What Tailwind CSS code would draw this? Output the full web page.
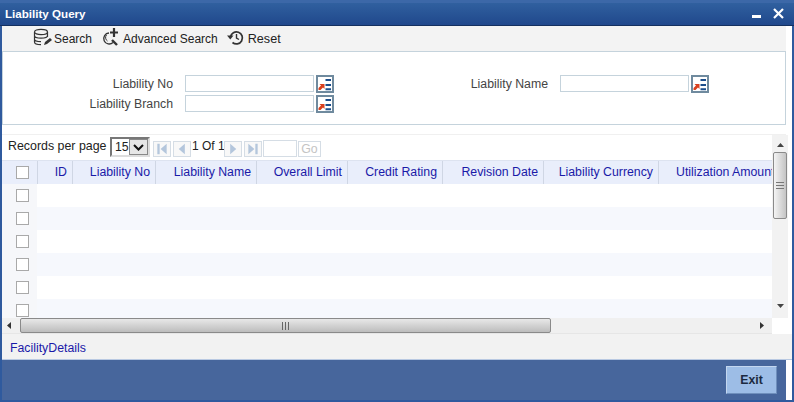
<!DOCTYPE html>
<html lang="en">
<head>
  <meta charset="UTF-8" />
  <meta name="viewport" content="width=device-width,initial-scale=1" />
  <title>Liability Query</title>
  <script src="https://cdn.jsdelivr.net/npm/@tailwindcss/browser@4"></script>
</head>

<body class="w-[794px] h-[402px] overflow-hidden bg-[#2f5a9e] font-['Liberation_Sans',Arial,sans-serif] text-[12.3px] text-[#222]">

<!-- ========= TITLE BAR ========= -->
<header class="h-[26px] flex items-center justify-between bg-gradient-to-b from-[#30609f] to-[#20488c] border-b border-[#14305f] border-t-[3px] border-t-[#3c68a8]">
  <span class="pl-[5px] font-bold text-[11.6px] text-white">Liability Query</span>
  <div class="flex items-start">
    <span class="block w-[9px] h-[3px] bg-white mr-[12px] mt-[5px]"></span>
    <svg class="mr-[10px] -mt-[2px]" width="11" height="11" viewBox="0 0 11 11"><path d="M1 1l9 9M10 1l-9 9" stroke="#fff" stroke-width="2.2"/></svg>
  </div>
</header>

<div class="flex h-[376px]">
  <div class="w-[2px] bg-[#2f5a9e]"></div>

  <div class="w-[790px] bg-white flex flex-col">
    <!-- ========= TOOLBAR ========= -->
    <div class="h-[25px] w-[784px] bg-[#f3f3f3] flex items-center pl-[30px] pt-[2px] text-[12px] text-[#222]">
      <svg class="mr-[1px] -mt-[3px]" width="21" height="20" viewBox="0 0 21 20" fill="none" stroke="#333" stroke-width="1.2">
        <ellipse cx="9" cy="4" rx="6.5" ry="2.6"/>
        <path d="M2.500 4v10c0 1.500 3 2.600 6.500 2.600M15.500 4v5M2.500 7.500c0 1.500 3 2.600 6.500 2.600s6.500-1 6.500-2.600M2.500 11c0 1.500 3 2.600 6.500 2.600"/>
        <path d="M12 17l1-3 5-4 2 2-5 4z" fill="#333" stroke="none"/>
      </svg>
      <span class="mr-[10px]">Search</span>
      <svg class="mr-[4px] -mt-[3px]" width="17" height="19" viewBox="0 0 17 19" fill="none" stroke="#333">
        <path d="M7 5a5.500 5.500 0 1 0 4 9.500" stroke-width="1.300"/>
        <path d="M4.500 7a4 4 0 0 0 1 6" stroke-width="1"/>
        <path d="M10 12l5 5" stroke-width="2.400"/>
        <path d="M12 0v9M8 4.500h8" stroke-width="2.200"/>
      </svg>
      <span class="mr-[9px]">Advanced Search</span>
      <svg class="mr-[4px] -mt-[3px]" width="17" height="16" viewBox="0 0 17 16" fill="none" stroke="#333" stroke-width="1.700">
        <path d="M3.500 7a6 6 0 1 1 2 5.500"/>
        <path d="M0 5.500h6.500L3.300 9.500z" fill="#333" stroke="none"/>
        <path d="M9.500 4v4l2.500 1.500" stroke-width="1.400"/>
      </svg>
      <span class="text-[12.6px]">Reset</span>
    </div>

    <!-- ========= SEARCH FORM ========= -->
    <div class="h-[75px] w-[784px] border border-[#c5d3dc] pt-[23px] text-[#444]">
      <div class="flex items-center h-[18px]">
        <label class="w-[170px] text-right">Liability No</label>
        <input class="ml-[12px] w-[129px] h-[17px] border border-[#c5d3dc] bg-white" />
        <button id="lovA" class="ml-[2px]"></button>
        <label class="w-[214px] text-right">Liability Name</label>
        <input class="ml-[12px] w-[129px] h-[17px] border border-[#c5d3dc] bg-white" />
        <button id="lovB" class="ml-[2px]"></button>
      </div>
      <div class="flex items-center h-[18px] mt-[2px]">
        <label class="w-[170px] text-right">Liability Branch</label>
        <input class="ml-[12px] w-[129px] h-[17px] border border-[#c5d3dc] bg-white" />
        <button id="lovC" class="ml-[2px]"></button>
      </div>
    </div>

    <div class="h-[10px] w-[784px] border-b border-[#f0f0f0]"></div>

    <!-- ========= GRID + V SCROLL ========= -->
    <div class="flex h-[183px] w-[786px]">
      <div class="w-[770px] flex flex-col overflow-hidden">
        <!-- pager -->
        <div class="h-[25px] shrink-0 flex items-end pl-[6px] pb-[3px]">
          <span class="w-[102px] text-[12.4px] text-[#222] mb-[2px] whitespace-nowrap">Records per page</span>
          <div class="w-[40px] h-[20px] flex border-2 border-t-[#777] border-l-[#777] border-r-[#ddd] border-b-[#ddd] bg-white">
            <span class="flex-1 pl-[3px] text-[#222] leading-[17px]">15</span>
            <span class="w-[19px] grid place-content-center bg-[#e6e6e6] border border-[#888]">
              <svg width="11" height="7" viewBox="0 0 11 7" fill="none"><path d="M1 1l4.500 4.500L10 1" stroke="#111" stroke-width="2"/></svg>
            </span>
          </div>
          <span id="pgFirst" class="ml-[3px]"></span>
          <span id="pgPrev" class="ml-[2px]"></span>
          <span class="ml-[1px] w-[30px] text-[12px] text-[#222] mb-[2px] whitespace-nowrap">1 Of 1</span>
          <span id="pgNext" class="ml-[2px]"></span>
          <span id="pgLast" class="ml-[2px]"></span>
          <span class="ml-[1px] w-[34px] h-[17px] border border-[#d5dde5] bg-white"></span>
          <span class="ml-[1px] w-[23px] h-[16px] border border-[#d5dde5] text-[#c4c4c4] text-center leading-[15px]">Go</span>
        </div>
        <!-- header -->
        <div id="gridHead" class="h-[24px] shrink-0 flex bg-[#e9eefb] border-t border-[#dde3f0] text-[#1a1aa8]"></div>
        <!-- rows -->
        <div id="gridRows" class="flex-1 overflow-hidden"></div>
      </div>
      <!-- vertical scrollbar -->
      <div class="w-[16px] bg-[#f2f2f2] flex flex-col items-center relative">
        <svg class="mt-[8px]" width="7" height="4" viewBox="0 0 7 4"><path d="M3.500 0L7 4H0z" fill="#444"/></svg>
        <div class="mt-[5px] w-[14px] h-[67px] rounded-[2px] border border-[#8a8a8a] bg-gradient-to-r from-[#f4f4f4] to-[#c4c4c4] grid place-content-center">
          <span class="block w-[8px] h-[7px] border-y border-[#777] relative after:absolute after:left-0 after:top-[2px] after:w-[8px] after:h-px after:bg-[#777]"></span>
        </div>
        <svg class="mt-[85px]" width="7" height="4" viewBox="0 0 7 4"><path d="M0 0h7L3.500 4z" fill="#444"/></svg>
      </div>
    </div>

    <!-- ========= H SCROLL ========= -->
    <div class="h-[16px] w-[770px] bg-[#f0f0f0] flex items-center border-b border-[#e6e6e6]">
      <svg class="ml-[5px]" width="4" height="7" viewBox="0 0 4 7"><path d="M4 0v7L0 3.500z" fill="#333"/></svg>
      <div class="ml-[9px] w-[531px] h-[15px] rounded-[2px] border border-[#8a8a8a] bg-gradient-to-b from-[#e8e8e8] to-[#bdbdbd] grid place-content-center">
        <span class="block w-[7px] h-[8px] border-x border-[#666] relative after:absolute after:left-[2px] after:top-0 after:w-px after:h-[8px] after:bg-[#666]"></span>
      </div>
      <svg class="ml-[209px]" width="4" height="7" viewBox="0 0 4 7"><path d="M0 0v7l4-3.500z" fill="#333"/></svg>
    </div>

    <!-- ========= FOOTER LINKS ========= -->
    <div class="h-[26px] w-[792px] bg-[#f2f2f2] border-b border-[#b9c9e2] flex items-center pl-[8px] text-[#1a1aa8] pt-[2px]">FacilityDetails</div>

    <!-- ========= BOTTOM BAR ========= -->
    <div class="h-[40px] w-[784px] bg-[#47669c] flex justify-end items-start pt-[6px] pr-[9px]">
      <button class="w-[51px] h-[28px] bg-[#9dbde6] border border-t-[#c3d6ef] border-l-[#c3d6ef] border-r-[#6f8fbc] border-b-[#6f8fbc] font-bold text-[#1c2a40]">Exit</button>
    </div>
    <div class="h-[2px] w-[790px] bg-[#2f5a9e]"></div>
  </div>

  <div class="w-[2px] bg-[#2f5a9e]"></div>
</div>

<script>
/* ========= LOV BUTTONS ========= */
const lov = `<span class="block w-[18px] h-[18px] border-2 border-[#6f8a9e] bg-white">
  <svg width="14" height="14" viewBox="0 0 14 14">
    <path d="M.5 13v-2L3 8.500 1.500 7h5v5L5 10.500 2.500 13z" fill="#d8401f"/>
    <path d="M7.500 3h5.500M7.500 8h5.500M7.500 12.200h5.500" stroke="#1d4f8c" stroke-width="2"/>
  </svg></span>`;
['lovA','lovB','lovC'].forEach(id => document.getElementById(id).innerHTML = lov);

/* ========= PAGER BUTTONS ========= */
const pager = {
  pgFirst: 'M3 2h2.500v11H3zM13 2v11L6.500 7.500z',
  pgPrev : 'M11 2v11L4.500 7.500z',
  pgNext : 'M5 2v11l6.500-5.500z',
  pgLast : 'M3 2v11l6.500-5.500zM10.500 2H13v11h-2.500z'
};
Object.keys(pager).forEach(id => {
  document.getElementById(id).innerHTML =
    `<span class="block w-[18px] h-[16px] border border-[#d5dde5] bg-[#f8f8f8]"><svg width="16" height="14" viewBox="0 0 16 15"><path d="${pager[id]}" fill="#b4c6dc"/></svg></span>`;
});

/* ========= GRID ========= */
const checkbox = `<span class="block w-[13px] h-[13px] border border-[#a9a9a9] bg-white"></span>`;
const columns = [
  ['ID', 'w-[35px]'],
  ['Liability No', 'w-[83px]'],
  ['Liability Name', 'w-[101px]'],
  ['Overall Limit', 'w-[91px]'],
  ['Credit Rating', 'w-[95px]'],
  ['Revision Date', 'w-[101px]'],
  ['Liability Currency', 'w-[115px]']
];
document.getElementById('gridHead').innerHTML =
  `<div class="w-[36px] shrink-0 flex items-center pl-[14px] border-r border-[#cfd6e4]">${checkbox}</div>` +
  columns.map(c => `<div class="${c[1]} shrink-0 text-right pr-[5px] leading-[22px] whitespace-nowrap border-r border-[#cfd6e4]">${c[0]}</div>`).join('') +
  `<div class="w-[113px] shrink-0 overflow-hidden pl-[17px] leading-[22px] whitespace-nowrap">Utilization Amount</div>`;

const tints = ['bg-white', 'bg-[#f6f8fd]'];
let html = '';
for (let i = 0; i < 6; i++) {
  html += `<div class="h-[23px] flex ${tints[i % 2]}">
    <div class="w-[35px] bg-[#f6f7fa] flex items-center pl-[14px]">${checkbox}</div>
  </div>`;
}
document.getElementById('gridRows').innerHTML = html;
</script>
</body>
</html>
